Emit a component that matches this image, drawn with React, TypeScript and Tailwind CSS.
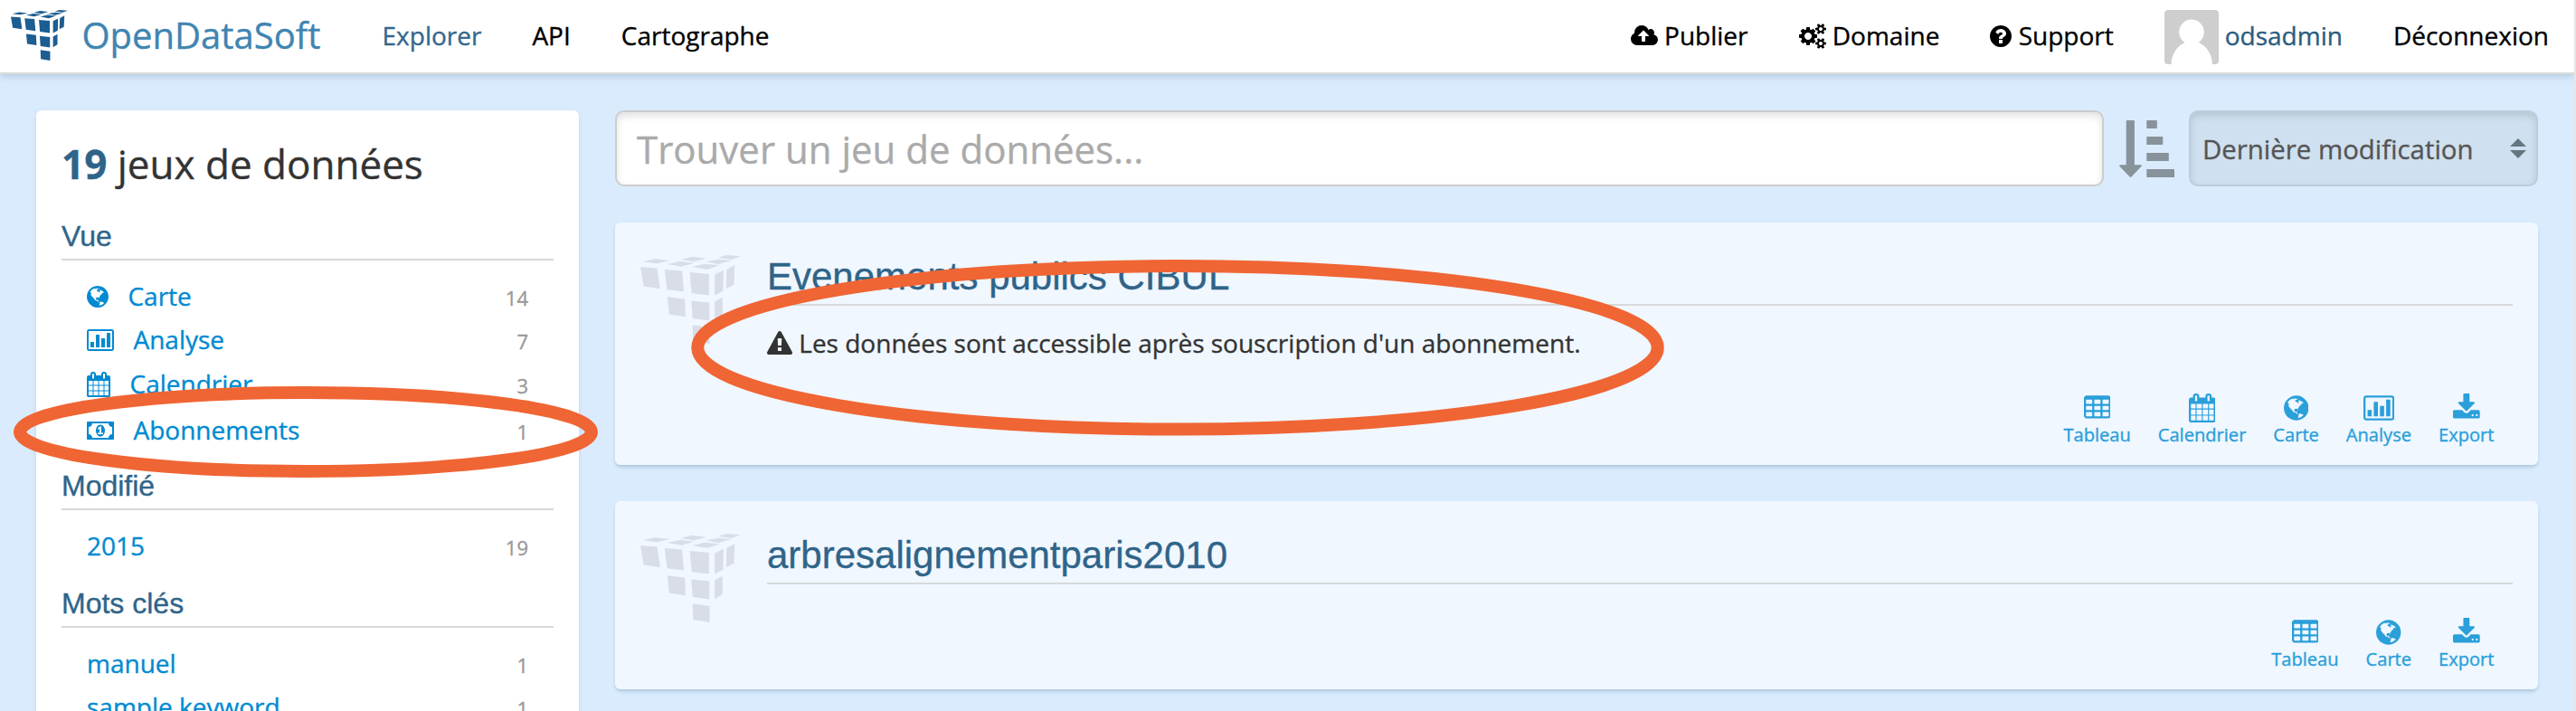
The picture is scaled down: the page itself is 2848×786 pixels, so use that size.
import type { ReactNode } from "react";

const GLYPHS = {
  cloud: {
    box: "0 128 1920 1792",
    width: "w-[1.0714em]",
    d: "M1280 992q0-14-9-23l-352-352q-9-9-23-9t-23 9l-351 351q-10 12-10 24 0 14 9 23t23 9h224v352q0 13 9.5 22.5t22.5 9.5h192q13 0 22.5-9.5t9.5-22.5v-352h224q13 0 22.5-9.5t9.5-22.5zm640 288q0 159-112.5 271.5t-271.5 112.5h-1088q-185 0-316.5-131.5t-131.5-316.5q0-130 70-240t188-165q-2-30-2-43 0-212 150-362t362-150q156 0 285.5 87t188.5 231q71-62 166-62 106 0 181 75t75 181q0 76-41 138 130 31 213.5 135.5t83.5 238.5z",
  },
  cogs: {
    box: "0 0 1920 1792",
    width: "w-[1.0714em]",
    d: "M896 896q0-106-75-181t-181-75-181 75-75 181 75 181 181 75 181-75 75-181zm768 512q0-52-38-90t-90-38-90 38-38 90q0 53 37.5 90.5t90.5 37.5 90.5-37.5 37.5-90.5zm0-1024q0-52-38-90t-90-38-90 38-38 90q0 53 37.5 90.5t90.5 37.5 90.5-37.5 37.5-90.5zm-384 421v185q0 10-7 19.5t-16 10.5l-155 24q-11 35-32 76 34 48 90 115 7 11 7 20 0 12-7 19-23 30-82.5 89.5t-78.5 59.5q-11 0-21-7l-115-90q-37 19-77 31-11 108-23 155-7 24-30 24h-186q-11 0-20-7.5t-10-17.5l-23-153q-34-10-75-31l-118 89q-7 7-20 7-11 0-21-8-144-133-144-160 0-9 7-19 10-14 41-53t47-61q-23-44-35-82l-152-24q-10-1-17-9.5t-7-19.5v-185q0-10 7-19.5t16-10.5l155-24q11-35 32-76-34-48-90-115-7-11-7-20 0-12 7-20 22-30 82-89t79-59q11 0 21 7l115 90q34-18 77-32 11-108 23-154 7-24 30-24h186q11 0 20 7.5t10 17.5l23 153q34 10 75 31l118-89q8-7 20-7 11 0 21 8 144 133 144 160 0 8-7 19-12 16-42 54t-45 60q23 48 34 82l152 23q10 2 17 10.5t7 19.5zm640 533v140q0 16-149 31-12 27-30 52 51 113 51 138 0 4-4 7-122 71-124 71-8 0-46-47t-52-68q-20 2-30 2t-30-2q-14 21-52 68t-46 47q-2 0-124-71-4-3-4-7 0-25 51-138-18-25-30-52-149-15-149-31v-140q0-16 149-31 13-29 30-52-51-113-51-138 0-4 4-7 4-2 35-20t59-34 30-16q8 0 46 46.5t52 67.5q20-2 30-2t30 2q51-71 92-112l6-2q4 0 124 70 4 3 4 7 0 25-51 138 17 23 30 52 149 15 149 31zm0-1024v140q0 16-149 31-12 27-30 52 51 113 51 138 0 4-4 7-122 71-124 71-8 0-46-47t-52-68q-20 2-30 2t-30-2q-14 21-52 68t-46 47q-2 0-124-71-4-3-4-7 0-25 51-138-18-25-30-52-149-15-149-31v-140q0-16 149-31 13-29 30-52-51-113-51-138 0-4 4-7 4-2 35-20t59-34 30-16q8 0 46 46.5t52 67.5q20-2 30-2t30 2q51-71 92-112l6-2q4 0 124 70 4 3 4 7 0 25-51 138 17 23 30 52 149 15 149 31z",
  },
  question: {
    box: "128 0 1536 1792",
    width: "w-[0.857em]",
    d: "M1024 1376v-192q0-14-9-23t-23-9h-192q-14 0-23 9t-9 23v192q0 14 9 23t23 9h192q14 0 23-9t9-23zm256-672q0-88-55.5-163t-138.5-116-170-41q-243 0-371 213-15 24 8 42l132 100q7 6 19 6 16 0 25-12 53-68 86-92 34-24 86-24 48 0 85.5 26t37.5 59q0 38-20 61t-68 45q-63 28-115.5 86.5t-52.5 125.5v36q0 14 9 23t23 9h192q14 0 23-9t9-23q0-19 21.5-49.5t54.5-49.5q32-18 49-28.5t46-35 44.5-48 28-60.5 12.5-81zm384 192q0 209-103 385.5t-279.5 279.5-385.5 103-385.5-103-279.5-279.5-103-385.5 103-385.5 279.5-279.5 385.5-103 385.5 103 279.5 279.5 103 385.5z",
  },
  globe: {
    box: "128 0 1536 1792",
    width: "w-[0.857em]",
    d: "M896 128q209 0 385.5 103t279.5 279.5 103 385.5-103 385.5-279.5 279.5-385.5 103-385.5-103-279.5-279.5-103-385.5 103-385.5 279.5-279.5 385.5-103zm274 521q-2 1-9.5 9.5t-13.5 9.5q2 0 4.5-5t5-11 3.5-7q6-7 22-15 14-6 52-12 34-8 51 11-2-2 9.5-13t14.5-12q3-2 15-4.5t15-7.5l2-22q-12 1-17.5-7t-6.5-21q0 2-6 8 0-7-4.5-8t-11.5 1-9 1q-10-3-15-7.5t-8-16.5-4-15q-2-5-9.5-11t-9.5-10q-1-2-2.5-5.5t-3-6.5-4-5.5-5.5-2.5-7 5-7.5 10-4.5 5q-3-2-6-1.5t-4.5 1-4.5 3-5 3.5q-3 2-8.5 3t-8.5 2q15-5-1-11-10-4-16-3 9-4 7.5-12t-8.5-14h5q-1-4-8.5-8.5t-17.5-8.5-13-6q-8-5-34-9.5t-33-.5q-5 6-4.5 10.5t4 14 3.5 12.5q1 6-5.5 13t-6.5 12q0 7 14 15.5t10 21.5q-3 8-16 16t-16 12q-5 8-1.5 18.5t10.5 16.5q2 2 1.5 4t-3.5 4.5-5.5 4-6.5 3.5l-3 2q-11 5-20.5-6t-13.5-26q-7-25-16-30-23-8-29 1-5-13-41-26-25-9-58-4 6-1 0-15-7-15-19-12 3-6 4-17.5t1-13.5q3-13 12-23 1-1 7-8.5t9.5-13.5.5-6q35 4 50-11 5-5 11.5-17t10.5-17q9-6 14-5.5t14.5 5.5 14.5 5q14 1 15.5-11t-7.5-20q12 1 3-17-4-7-8-9-12-4-27 5-8 4 2 8-1-1-9.5 10.5t-16.5 17.5-16-5q-1-1-5.5-13.5t-9.5-13.5q-8 0-16 15 3-8-11-15t-24-8q19-12-8-27-7-4-20.5-5t-19.5 4q-5 7-5.500 11.500t5 8 10.500 5.500 11.500 4 8.500 3q14 10 8 14-2 1-8.500 3.500t-11.500 4.500-6 4q-3 4 0 14t-2 14q-5-5-9-17.500t-7-16.500q7 9-25 6l-10-1q-4 0-16 2t-20.500 1-13.500-8q-4-8 0-20 1-4 4-2-4-3-11-9.500t-10-8.500q-46 15-94 41 6 1 12-1 5-2 13-6.500t10-5.500q34-14 42-7l5-5q14 16 20 25-7-4-30-1-20 6-22 12 7 12 5 18-4-3-11.500-10t-14.500-11-15-5q-16 0-22 1-146 80-235 222 7 7 12 8 4 1 5 9t2.500 11 11.500-3q9 8 3 19 1-1 44 27 19 17 21 21 3 11-10 18-1-2-9-9t-9-4q-3 5 .5 18.500t10.500 12.500q-7 0-9.500 16t-2.500 35.500-1 23.500l2 1q-3 12 5.500 34.500t21.500 19.500q-13 3 20 43 6 8 8 9 3 2 12 7.500t15 10 10 10.500q4 5 10 22.500t14 23.500q-2 6 9.500 20t10.500 23q-1 0-2.500 1t-2.500 1q3 7 15.500 14t15.500 13q1 3 2 10t3 11 8 2q2-20-24-62-15-25-17-29-3-5-5.500-15.500t-4.500-14.500q2 0 6 1.500t8.500 3.500 7.500 4 2 3q-3 7 2 17.500t12 18.500 17 19 12 13q6 6 14 19.500t0 13.500q9 0 20 10.500t17 19.500q5 8 8 26t5 24q2 7 8.500 13.500t12.500 9.500l16 8 13 7q5 2 18.500 10.500t21.500 11.500q10 4 16 4t14.500-2.500 13.500-3.500q15-2 29 15t21 21q36 19 55 11-2 1 .5 7.500t8 15.500 9 14.500 5.500 8.500q5 6 18 15t18 15q6-4 7-9-3 8 7 20t18 10q14-3 14-32-31 15-49-18 0-1-2.500-5.500t-4-8.500-2.500-8.500 0-7.500 5-3q9 0 10-3.500t-2-12.500-4-13q-1-8-11-20t-12-15q-5 9-16 8t-16-9q0 1-1.500 5.500t-1.500 6.500q-13 0-15-1 1-3 2.500-17.500t3.500-22.500q1-4 5.500-12t7.500-14.500 4-12.500-4.500-9.500-17.500-2.500q-19 1-26 20-1 3-3 10.500t-5 11.500-9 7q-7 3-24 2t-24-5q-13-8-22.500-29t-9.500-37q0-10 2.500-26.500t3-25-5.500-24.500q3-2 9-9.500t10-10.500q2-1 4.500-1.500t4.500 0 4-1.500 3-6q-1-1-4-3-3-3-4-3 7 3 28.500-1.500t27.500 1.500q15 11 22-2 0-1-2.500-9.500t-.5-13.500q5 27 29 9 3 3 15.500 5t17.500 5q3 2 7 5.500t5.500 4.500 5-.5 8.500-6.500q10 14 12 24 11 40 19 44 7 3 11 2t4.500-9.500 0-14-1.500-12.500l-1-8v-18l-1-8q-15-3-18.500-12t1.500-18.500 15-18.500q1-1 8-3.500t15.500-6.500 12.500-8q21-19 15-35 7 0 11-9-1 0-5-3t-7.500-5-4.500-2q9-5 2-16 5-3 7.500-11t7.500-10q9 12 21 2 7-8 1-16 5-7 20.500-10.500t18.500-9.500q7 2 8-2t1-12 3-12q4-5 15-9t13-5l17-11q3-4 0-4 18 2 31-11 10-11-6-20 3-6-3-9.500t-15-5.500q3-1 11.500-.5t10.500-1.500q15-10-7-16-17-5-43 12zm-163 877q206-36 351-189-3-3-12.500-4.500t-12.500-3.500q-18-7-24-8 1-7-2.500-13t-8-9-12.500-8-11-7q-2-2-7-6t-7-5.500-7.500-4.500-8.500-2-10 1l-3 1q-3 1-5.500 2.500t-5.500 3-4 3 0 2.500q-21-17-36-22-5-1-11-5.500t-10.500-7-10-1.500-11.500 7q-5 5-6 15t-2 13q-7-5 0-17.500t2-18.500q-3-6-10.500-4.500t-12 4.500-11.500 8.500-9 6.500-8.500 5.500-8.500 7.500q-3 4-6 12t-5 11q-2-4-11.500-6.500t-9.500-5.500q2 10 4 35t5 38q7 31-12 48-27 25-29 40-4 22 12 26 0 7-8 20.500t-7 21.500q0 6 2 16z",
  },
  chart: {
    box: "0 0 1920 1792",
    width: "w-[1.0714em]",
    d: "M256 1024h256v384h-256zM640 512h256v896h-256zM1024 768h256v640h-256zM1408 384h256v1024h-256zM160 128h1600q66 0 113 47t47 113v1216q0 66-47 113t-113 47h-1600q-66 0-113-47t-47-113v-1216q0-66 47-113t113-47zm0 128q-13 0-22.5 9.5t-9.5 22.5v1216q0 13 9.5 22.5t22.5 9.5h1600q13 0 22.5-9.5t9.5-22.5v-1216q0-13-9.5-22.5t-22.5-9.5z",
  },
  calendar: {
    box: "64 0 1664 1792",
    width: "w-[0.9286em]",
    d: "M192 1664h288v-288h-288v288zm352 0h320v-288h-320v288zm-352-352h288v-320h-288v320zm352 0h320v-320h-320v320zm-352-384h288v-288h-288v288zm736 736h320v-288h-320v288zm-384-736h320v-288h-320v288zm768 736h288v-288h-288v288zm-384-352h320v-320h-320v320zm-352-864v-288q0-13-9.5-22.5t-22.5-9.5h-64q-13 0-22.5 9.5t-9.5 22.5v288q0 13 9.5 22.5t22.5 9.5h64q13 0 22.5-9.5t9.5-22.5zm736 864h288v-320h-288v320zm-384-384h320v-288h-320v288zm384 0h288v-288h-288v288zm32-480v-288q0-13-9.5-22.5t-22.5-9.5h-64q-13 0-22.5 9.5t-9.5 22.5v288q0 13 9.5 22.5t22.5 9.5h64q13 0 22.5-9.5t9.5-22.5zm384-64v1280q0 52-38 90t-90 38h-1408q-52 0-90-38t-38-90v-1280q0-52 38-90t90-38h128v-96q0-66 47-113t113-47h64q66 0 113 47t47 113v96h384v-96q0-66 47-113t113-47h64q66 0 113 47t47 113v96h128q52 0 90 38t38 90z",
  },
  money: {
    box: "0 0 1920 1792",
    width: "w-[1.0714em]",
    d: "M768 1152h384v-96h-128v-448h-114l-148 137 77 80q42-37 55-57h2v288h-128v96zm512-256q0 70-21 142t-59.5 134-101.5 101-138 39-138-39-101.5-101-59.5-134-21-142 21-142 59.5-134 101.5-101 138-39 138 39 101.5 101 59.5 134 21 142zm512 256v-512q-106 0-181-75t-75-181h-1152q0 106-75 181t-181 75v512q106 0 181 75t75 181h1152q0-106 75-181t181-75zm128-832v1152q0 26-19 45t-45 19h-1792q-26 0-45-19t-19-45v-1152q0-26 19-45t45-19h1792q26 0 45 19t19 45z",
  },
  table: {
    box: "64 0 1664 1792",
    width: "w-[0.9286em]",
    d: "M224 384h320q32 0 32 32v192q0 32-32 32h-320q-32 0-32-32v-192q0-32 32-32zM736 384h320q32 0 32 32v192q0 32-32 32h-320q-32 0-32-32v-192q0-32 32-32zM1248 384h320q32 0 32 32v192q0 32-32 32h-320q-32 0-32-32v-192q0-32 32-32zM224 768h320q32 0 32 32v192q0 32-32 32h-320q-32 0-32-32v-192q0-32 32-32zM736 768h320q32 0 32 32v192q0 32-32 32h-320q-32 0-32-32v-192q0-32 32-32zM1248 768h320q32 0 32 32v192q0 32-32 32h-320q-32 0-32-32v-192q0-32 32-32zM224 1152h320q32 0 32 32v192q0 32-32 32h-320q-32 0-32-32v-192q0-32 32-32zM736 1152h320q32 0 32 32v192q0 32-32 32h-320q-32 0-32-32v-192q0-32 32-32zM1248 1152h320q32 0 32 32v192q0 32-32 32h-320q-32 0-32-32v-192q0-32 32-32zM1728 288v1088q0 66-47 113t-113 47h-1344q-66 0-113-47t-47-113v-1088q0-66 47-113t113-47h1344q66 0 113 47t47 113z",
  },
  download: {
    box: "64 0 1664 1792",
    width: "w-[0.9286em]",
    d: "M1344 1344q0-26-19-45t-45-19-45 19-19 45 19 45 45 19 45-19 19-45zm256 0q0-26-19-45t-45-19-45 19-19 45 19 45 45 19 45-19 19-45zm128-224v320q0 40-28 68t-68 28h-1472q-40 0-68-28t-28-68v-320q0-40 28-68t68-28h465l135 136q58 56 136 56t136-56l136-136h464q40 0 68 28t28 68zm-325-569q17 41-14 70l-448 448q-18 19-45 19t-45-19l-448-448q-31-29-14-70 17-39 59-39h256v-448q0-26 19-45t45-19h256q26 0 45 19t19 45v448h256q42 0 59 39z",
  },
  warning: {
    box: "0 0 1792 1792",
    width: "w-[1em]",
    d: "M1024 1375v-190q0-14-9.5-23.5t-22.5-9.5h-192q-13 0-22.5 9.5t-9.5 23.5v190q0 14 9.5 23.5t22.5 9.5h192q13 0 22.5-9.5t9.5-23.5zm-2-374l18-459q0-12-10-19-13-11-24-11h-220q-11 0-24 11-10 7-10 21l17 457q0 10 10 16.5t24 6.5h185q14 0 23.5-6.5t10.5-16.5zm-14-934l768 1408q35 63-2 126-17 29-46.5 46t-63.5 17h-1536q-34 0-63.5-17t-46.5-46q-37-63-2-126l768-1408q17-31 47-49t65-18 65 18 47 49z",
  },
};

type GlyphName = keyof typeof GLYPHS;

function Glyph({ name, className = "" }: { name: GlyphName; className?: string }) {
  const g = GLYPHS[name];
  return (
    <svg
      viewBox={g.box}
      fill="currentColor"
      fillRule="evenodd"
      className={`inline-block h-[1em] shrink-0 align-[-0.1429em] ${g.width} ${className}`}
    >
      <path d={g.d} />
    </svg>
  );
}

function Cubes({ className }: { className: string }) {
  return (
    <svg viewBox="23 54 335 293" preserveAspectRatio="none" fill="currentColor" className={className}>
      <path d="M30 76L72 67L122 72L78 82ZM112 84L156 75L203 80L160 92ZM196 93L238 83L288 88L246 102ZM158 69L196 59L243 65L202 76ZM240 76L284 68L327 72L284 84ZM282 62L310 54L358 58L326 69Z" />
      <path d="M23 93L79 97L89 165L34 157ZM104 102L162 106L168 175L112 168ZM188 111L252 117L252 187L194 180ZM271 118L300 104L299 173L271 187ZM311 101L338 87L335 152L309 165Z" />
      <path d="M113 192L171 199L174 258L119 250ZM193 205L253 211L253 271L197 263ZM271 208L297 194L297 254L271 270ZM197 285L254 293L254 347L199 338Z" />
    </svg>
  );
}

function Header() {
  return (
    <header className="relative z-10 flex h-[82px] items-center whitespace-nowrap border-b-2 border-[#d9dbdb] bg-white pb-[2px] pl-3 pr-[28px] text-[28px] text-black shadow-[0_2px_8px_rgba(120,155,175,0.45)]">
      <Cubes className="h-[56px] w-[63px] text-[#1c5d92]" />
      <span className="ml-[15.5px] text-[40px] text-[#3f85b1]">OpenDataSoft</span>
      <nav className="ml-[68px] flex gap-14">
        <a className="text-[#34678d]">Explorer</a>
        <a>API</a>
        <a>Cartographe</a>
      </nav>
      <nav className="ml-auto flex items-center gap-14">
        <a>
          <Glyph name="cloud" /> Publier
        </a>
        <a>
          <Glyph name="cogs" /> Domaine
        </a>
        <a>
          <Glyph name="question" /> Support
        </a>
        <a className="flex items-center gap-[7px] text-[#2a5d80]">
          <svg viewBox="0 0 60 60" className="mt-1 h-[60px] w-[60px] rounded bg-[#cecece]">
            <circle cx="30" cy="24.4" r="13.8" fill="#fff" />
            <ellipse cx="30.2" cy="61" rx="22.8" ry="26.5" fill="#fff" />
          </svg>
          odsadmin
        </a>
        <a>Déconnexion</a>
      </nav>
    </header>
  );
}

function SectionTitle({ children, className }: { children: ReactNode; className: string }) {
  return (
    <h2
      className={`mb-[15px] border-b-2 border-[#d9d9d9] pb-[5px] font-['Liberation_Sans',sans-serif] text-[32px] leading-[40px] text-[#2f6489] ${className}`}
    >
      {children}
    </h2>
  );
}

function Row({ icon, label, count, line = "leading-[48px]" }: { icon?: GlyphName; label: string; count: number; line?: string }) {
  return (
    <div className={`flex items-baseline justify-between px-7 text-[28px] text-[#008ad1] ${line}`}>
      <a>
        {icon && <Glyph name={icon} className="mr-[21.5px]" />}
        {label}
      </a>
      <span className="text-[22px] leading-none text-[#999]">{count}</span>
    </div>
  );
}

function Sidebar() {
  return (
    <aside className="h-[720px] w-[600px] shrink-0 rounded-md bg-white px-7 pt-[29px] shadow-[0_2px_4px_rgba(90,140,180,0.25)]">
      <h1 className="text-[44px] leading-[60px] text-[#333]">
        <b className="text-[#2f6489]">19</b> jeux de données
      </h1>
      <SectionTitle className="mt-[30px]">Vue</SectionTitle>
      <Row icon="globe" label="Carte" count={14} />
      <Row icon="chart" label="Analyse" count={7} />
      <Row icon="calendar" label="Calendrier" count={3} line="leading-[51px]" />
      <Row icon="money" label="Abonnements" count={1} line="leading-[50px]" />
      <SectionTitle className="mt-[17px]">Modifié</SectionTitle>
      <Row label="2015" count={19} />
      <SectionTitle className="mt-5">Mots clés</SectionTitle>
      <Row label="manuel" count={1} />
      <Row label="sample keyword" count={1} />
    </aside>
  );
}

function SearchBar() {
  return (
    <div className="flex h-[84px] items-center">
      <div className="flex h-full w-[1646px] items-center rounded-[10px] border-2 border-[#ccc] bg-white pl-[22px] text-[42px] text-[#aaa] shadow-[inset_0_4px_8px_rgba(0,0,0,0.12)]">
        Trouver un jeu de données...
      </div>
      <svg viewBox="0 0 61 63" fill="#88929b" className="ml-[17px] h-[63px] w-[61px]">
        <path d="M7.7 1q0-1 1-1h7.2q1 0 1 1v48.3h7q1.5.5.5 1.7l-11 11.5q-.9.8-1.8 0l-11-11.5q-1-1.2.5-1.7h6.6z" />
        <rect x="30.3" y="0" width="11.5" height="9" rx="0.6" />
        <rect x="30.3" y="18" width="18" height="9" rx="0.6" />
        <rect x="30.3" y="36" width="24.5" height="9" rx="0.6" />
        <rect x="30.3" y="54" width="30.7" height="9" rx="0.6" />
      </svg>
      <div className="ml-4 flex h-full w-[386px] items-center justify-between rounded-[10px] border-2 border-[#bccddb] bg-[#cfe0f0] pl-[13px] pr-[11px] text-[29.4px] text-[#555] shadow-[inset_0_4px_8px_rgba(0,0,0,0.12)]">
        <span className="pt-[2px]">Dernière modification</span>
        <svg viewBox="0 0 18 22" fill="#677580" className="h-[22px] w-[18px]">
          <path d="M0 9L9 0L18 9ZM0 13H18L9 22Z" />
        </svg>
      </div>
    </div>
  );
}

function Card({ title, height, actions, children }: { title: string; height: string; actions: [GlyphName, string][]; children?: ReactNode }) {
  return (
    <article className={`mt-10 flex rounded-md bg-[#f0f7ff] pl-7 pr-7 pt-[34px] shadow-[0_3px_4px_-1px_rgba(90,130,165,0.4)] ${height}`}>
      <Cubes className="mt-[2px] h-[98px] w-[111px] shrink-0 text-[#d9dde7]" />
      <div className="ml-[29px] flex flex-1 flex-col">
        <h3 className="border-b-2 border-[#d7d9da] pb-[5px] pt-px font-['Liberation_Sans',sans-serif] text-[42px] leading-[50px] text-[#2f6489]">
          {title}
        </h3>
        {children}
        <div className="mb-[21.5px] mr-[20.5px] mt-auto flex justify-end gap-[30px] text-[#2a9fda]">
          {actions.map(([icon, label]) => (
            <a key={label} className="flex flex-col items-center text-[20.1px] leading-6">
              <span className="flex pb-[1.5px] text-[32px]">
                <Glyph name={icon} />
              </span>
              {label}
            </a>
          ))}
        </div>
      </div>
    </article>
  );
}

export default function App() {
  return (
    <div className="relative h-[786px] w-[2848px] overflow-hidden border-r-2 border-[#e4e6e8] bg-[#daebfd] font-['Open_Sans','Noto_Sans',sans-serif] [-webkit-text-stroke:0.35px]">
      <Header />
      <main className="flex gap-10 pl-10 pr-10 pt-10">
        <Sidebar />
        <section className="w-[2126px] shrink-0">
          <SearchBar />
          <Card
            title="Evenements publics CIBUL"
            height="h-[268px]"
            actions={[
              ["table", "Tableau"],
              ["calendar", "Calendrier"],
              ["globe", "Carte"],
              ["chart", "Analyse"],
              ["download", "Export"],
            ]}
          >
            <p className="mt-[22px] text-[28px] leading-[38px] text-[#333]">
              <Glyph name="warning" /> Les données sont accessible après souscription d'un abonnement.
            </p>
          </Card>
          <Card
            title="arbresalignementparis2010"
            height="h-[208px]"
            actions={[
              ["table", "Tableau"],
              ["globe", "Carte"],
              ["download", "Export"],
            ]}
          />
        </section>
      </main>
      <svg viewBox="0 0 2848 786" className="pointer-events-none absolute left-0 top-0 z-20 h-[786px] w-[2848px]">
        <ellipse cx="338" cy="477.5" rx="316" ry="43.5" fill="none" stroke="#f06534" strokeWidth="14" />
        <ellipse cx="1302" cy="384.3" rx="530.7" ry="90.3" fill="none" stroke="#f06534" strokeWidth="14" />
      </svg>
    </div>
  );
}
